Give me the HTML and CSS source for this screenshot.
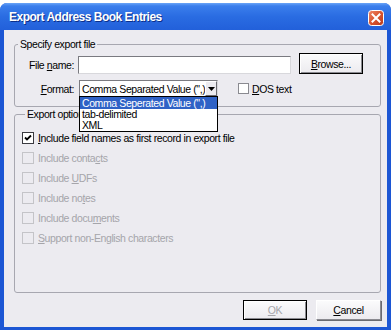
FILE: index.html
```html
<!DOCTYPE html>
<html lang="en">
<head>
    <meta charset="UTF-8">
    <title>Export Address Book Entries</title>
    <link rel="stylesheet" href="styles.css">
</head>
<body>
    <div class="window">
        <div class="titlebar">
            <span class="title">Export Address Book Entries</span>
            <span class="close">
                <svg width="16" height="16" viewBox="0 0 16 16">
                    <defs>
                        <linearGradient id="cg" x1="0" y1="0" x2="1" y2="1">
                            <stop offset="0" stop-color="#f08a6a"/>
                            <stop offset="0.5" stop-color="#d9542e"/>
                            <stop offset="1" stop-color="#b83a1c"/>
                        </linearGradient>
                    </defs>
                    <rect x="0.5" y="0.5" width="15" height="15" rx="3" fill="url(#cg)" stroke="#fff"/>
                    <path d="M4.5 4.5 L11.5 11.5 M11.5 4.5 L4.5 11.5" stroke="#fff" stroke-width="2" stroke-linecap="square"/>
                </svg>
            </span>
        </div>

        <div class="client">
            <fieldset class="group group-file">
                <legend>Specify export file</legend>
                <div class="row row-name">
                    <label class="field-label">File <u>n</u>ame:</label>
                    <div class="textbox"></div>
                    <div class="btn btn-default btn-browse"><u>B</u>rowse...</div>
                </div>
                <div class="row row-format">
                    <label class="field-label"><u>F</u>ormat:</label>
                    <div class="combo">
                        <span class="combo-value">Comma Separated Value (",)</span>
                        <span class="combo-arrow">
                            <svg width="7" height="4" viewBox="0 0 7 4"><path d="M0 0 H7 L3.5 4 Z" fill="#000"/></svg>
                        </span>
                        <ul class="combo-list">
                            <li class="selected">Comma Seperated Value (",)</li>
                            <li>tab-delimited</li>
                            <li>XML</li>
                        </ul>
                    </div>
                    <span class="check"></span>
                    <span class="check-text"><u>D</u>OS text</span>
                </div>
            </fieldset>

            <fieldset class="group group-options">
                <legend>Export options</legend>
                <div class="option">
                    <span class="check checked">
                        <svg width="8" height="8" viewBox="0 0 8 8"><path d="M1 3.5 L3 5.5 L7 1.5" stroke="#000" stroke-width="1.8" fill="none"/></svg>
                    </span>
                    <span><u>I</u>nclude field names as first record in export file</span>
                </div>
                <div class="option disabled">
                    <span class="check"></span>
                    <span>Include conta<u>c</u>ts</span>
                </div>
                <div class="option disabled">
                    <span class="check"></span>
                    <span>Include <u>U</u>DFs</span>
                </div>
                <div class="option disabled">
                    <span class="check"></span>
                    <span>Include no<u>t</u>es</span>
                </div>
                <div class="option disabled">
                    <span class="check"></span>
                    <span>Include docu<u>m</u>ents</span>
                </div>
                <div class="option disabled">
                    <span class="check"></span>
                    <span><u>S</u>upport non-English characters</span>
                </div>
            </fieldset>

            <div class="buttons">
                <div class="btn btn-default btn-ok disabled"><u>O</u>K</div>
                <div class="btn btn-cancel"><u>C</u>ancel</div>
            </div>
        </div>
    </div>
</body>
</html>
```

FILE: styles.css
```css
body {
    margin: 0;
    background: #ffffff;
    font-family: "Liberation Sans", Arial, sans-serif;
    font-size: 10.5px;
    letter-spacing: -0.4px;
    color: #000;
}
.window {
    width: 391px;
    height: 327px;
    margin-top: 3px;
    display: flex;
    flex-direction: column;
    border-radius: 7px 7px 0 0;
    background: #1c56d4;
    overflow: hidden;
}
.titlebar {
    height: 27px;
    flex: none;
    display: flex;
    align-items: center;
    justify-content: space-between;
    padding: 0 7px 0 9px;
    background: linear-gradient(#6aa4f7 0, #3a7eec 3px, #2a6ce2 50%, #2260da 100%);
}
.title {
    color: #fff;
    font-weight: bold;
    font-size: 12px;
    letter-spacing: -0.5px;
    text-shadow: 1px 1px 0 #0c2f8a;
}
.close {
    display: flex;
    margin-top: 2px;
}
.client {
    flex: 1;
    display: flex;
    flex-direction: column;
    margin: 0 4px 3px 4px;
    padding: 8px 6px 7px 10px;
    background: #ecebf0;
}
.group {
    margin: 0;
    padding: 0;
    border: 1px solid #a7a7b0;
    border-radius: 3px;
    min-width: 0;
}
.group legend {
    margin-left: 3px;
    padding: 0 2px;
    line-height: 13px;
}
.group-file {
    padding: 2px 0 9px 0;
}
.row {
    display: flex;
}
.row-name {
    align-items: flex-end;
}
.row-format {
    align-items: center;
    margin-top: 6px;
}
.field-label {
    width: 59px;
    text-align: right;
    margin-right: 4px;
}
.row-name .field-label {
    padding-bottom: 3px;
}
.textbox {
    width: 211px;
    height: 16px;
    background: #fff;
    border: 1px solid;
    border-color: #7a7a80 #d8d8dc #d8d8dc #7a7a80;
}
.btn {
    box-sizing: border-box;
    display: flex;
    align-items: center;
    justify-content: center;
    background: linear-gradient(#fbfbfc, #ecebef);
    border: 1px solid;
    border-color: #ffffff #8a8a90 #8a8a90 #ffffff;
    box-shadow: 1px 1px 0 #6a6a70;
}
.btn-default {
    border: 1px solid #000;
    box-shadow: inset 1px 1px 0 #fff, inset -1px -1px 0 #8a8a90;
}
.btn-browse {
    width: 64px;
    height: 21px;
    margin-left: 8px;
}
.combo {
    position: relative;
    box-sizing: border-box;
    width: 139px;
    height: 17px;
    margin-left: 1px;
    display: flex;
    align-items: center;
    background: #fff;
    border: 1px solid;
    border-color: #7a7a80 #d8d8dc #d8d8dc #7a7a80;
}
.combo-value {
    flex: 1;
    padding-left: 2px;
    white-space: nowrap;
}
.combo-arrow {
    box-sizing: border-box;
    width: 15px;
    height: 15px;
    display: flex;
    align-items: center;
    justify-content: center;
    background: #ecebf0;
    border: 1px solid;
    border-color: #fff #6a6a70 #6a6a70 #fff;
}
.combo-list {
    position: absolute;
    top: 100%;
    left: -1px;
    width: 139px;
    box-sizing: border-box;
    margin: 0;
    padding: 0;
    list-style: none;
    background: #fff;
    border: 1px solid #000;
    z-index: 2;
}
.combo-list li {
    height: 11px;
    line-height: 11px;
    padding-left: 2px;
}
.combo-list li.selected {
    height: 12px;
    line-height: 12px;
    background: #2f62c6;
    color: #fff;
}
.check {
    box-sizing: border-box;
    width: 12px;
    height: 12px;
    flex: none;
    display: flex;
    align-items: center;
    justify-content: center;
    background: #fff;
    border: 1px solid #3a3a40;
}
.row-format .check {
    width: 11px;
    height: 11px;
    margin-left: 20px;
    margin-right: 3px;
    border-color: #8a8a90;
}
.group-options {
    flex: 1;
    margin-top: 1px;
    padding: 7px 0 0 7px;
}
.option {
    height: 20px;
    display: flex;
    align-items: center;
    gap: 4px;
}
.option.disabled {
    color: #a5a5aa;
}
.option.disabled .check {
    background: #ecebf0;
    border-color: #c4c4c8;
}
.buttons {
    display: flex;
    justify-content: flex-end;
    gap: 9px;
    margin-top: 7px;
}
.btn-ok {
    width: 64px;
    height: 20px;
}
.btn-cancel {
    width: 65px;
    height: 20px;
}
.btn.disabled {
    color: #a5a5aa;
}
```
